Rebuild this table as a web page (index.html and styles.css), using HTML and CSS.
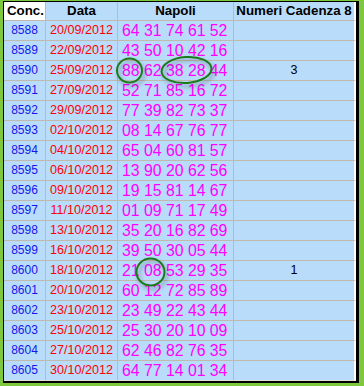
FILE: index.html
```html
<!DOCTYPE html>
<html>
<head>
<meta charset="utf-8">
<link rel="stylesheet" href="styles.css">
</head>
<body>
<div class="page">
  <div class="frame">
    <table class="grid">
      <colgroup>
        <col class="c-conc"><col class="c-data"><col class="c-nap"><col class="c-num">
      </colgroup>
      <thead>
        <tr>
          <th class="h-conc">Conc.</th>
          <th>Data</th>
          <th>Napoli</th>
          <th class="last">Numeri Cadenza 8</th>
        </tr>
      </thead>
      <tbody>
        <tr><td class="conc">8588</td><td class="date">20/09/2012</td><td class="nap">64 31 74 61 52</td><td class="num"></td></tr>
        <tr><td class="conc">8589</td><td class="date">22/09/2012</td><td class="nap">43 50 10 42 16</td><td class="num"></td></tr>
        <tr><td class="conc">8590</td><td class="date">25/09/2012</td><td class="nap">88 62 38 28 44</td><td class="num">3</td></tr>
        <tr><td class="conc">8591</td><td class="date">27/09/2012</td><td class="nap">52 71 85 16 72</td><td class="num"></td></tr>
        <tr><td class="conc">8592</td><td class="date">29/09/2012</td><td class="nap">77 39 82 73 37</td><td class="num"></td></tr>
        <tr><td class="conc">8593</td><td class="date">02/10/2012</td><td class="nap">08 14 67 76 77</td><td class="num"></td></tr>
        <tr><td class="conc">8594</td><td class="date">04/10/2012</td><td class="nap">65 04 60 81 57</td><td class="num"></td></tr>
        <tr><td class="conc">8595</td><td class="date">06/10/2012</td><td class="nap">13 90 20 62 56</td><td class="num"></td></tr>
        <tr><td class="conc">8596</td><td class="date">09/10/2012</td><td class="nap">19 15 81 14 67</td><td class="num"></td></tr>
        <tr><td class="conc">8597</td><td class="date">11/10/2012</td><td class="nap">01 09 71 17 49</td><td class="num"></td></tr>
        <tr><td class="conc">8598</td><td class="date">13/10/2012</td><td class="nap">35 20 16 82 69</td><td class="num"></td></tr>
        <tr><td class="conc">8599</td><td class="date">16/10/2012</td><td class="nap">39 50 30 05 44</td><td class="num"></td></tr>
        <tr><td class="conc">8600</td><td class="date">18/10/2012</td><td class="nap">21 08 53 29 35</td><td class="num">1</td></tr>
        <tr><td class="conc">8601</td><td class="date">20/10/2012</td><td class="nap">60 12 72 85 89</td><td class="num"></td></tr>
        <tr><td class="conc">8602</td><td class="date">23/10/2012</td><td class="nap">23 49 22 43 44</td><td class="num"></td></tr>
        <tr><td class="conc">8603</td><td class="date">25/10/2012</td><td class="nap">25 30 20 10 09</td><td class="num"></td></tr>
        <tr><td class="conc">8604</td><td class="date">27/10/2012</td><td class="nap">62 46 82 76 35</td><td class="num"></td></tr>
        <tr><td class="conc">8605</td><td class="date">30/10/2012</td><td class="nap">64 77 14 01 34</td><td class="num"></td></tr>
      </tbody>
    </table>
  </div>
  <svg class="marks" width="364" height="386" viewBox="0 0 364 386">
    <defs>
      <filter id="sh" x="-30%" y="-30%" width="160%" height="170%">
        <feGaussianBlur in="SourceAlpha" stdDeviation="2"/>
        <feOffset dx="2" dy="3" result="b"/>
        <feComponentTransfer><feFuncA type="linear" slope="0.35"/></feComponentTransfer>
        <feMerge><feMergeNode/><feMergeNode in="SourceGraphic"/></feMerge>
      </filter>
    </defs>
    <g fill="none" stroke="#1d7a1d" stroke-width="2" filter="url(#sh)">
      <ellipse cx="129.5" cy="70.5" rx="12.5" ry="12"/>
      <ellipse cx="186.5" cy="70" rx="25" ry="13" transform="rotate(-4 186.5 70)"/>
      <ellipse cx="150.5" cy="272" rx="14" ry="13.5"/>
    </g>
  </svg>
</div>
</body>
</html>
```

FILE: styles.css
```css
html, body {
  margin: 0;
  padding: 0;
}
body {
  background: #7dc83c;
  font-family: "Liberation Sans", Arial, sans-serif;
}
.page {
  position: relative;
  width: 364px;
  height: 386px;
  overflow: hidden;
}
.frame {
  margin: 1px 4px 0 3px;
  border-top: 1px solid #000;
  border-left: 1px solid #000;
  border-right: 3px solid #000;
  border-bottom: 2px solid #000;
  background: #fff;
  width: 352px;
  padding-right: 0;
}
.grid {
  border-collapse: separate;
  border-spacing: 0;
  table-layout: fixed;
  width: 352px;
  background: #b9dcfa;
}
.c-conc { width: 42px; }
.c-data { width: 72px; }
.c-nap { width: 116px; }
.c-num { width: 122px; }
.grid th,
.grid td {
  padding: 0;
  border-right: 1px solid #c2b9ad;
  border-bottom: 1px solid #c2b9ad;
  white-space: nowrap;
  overflow: hidden;
}
.grid th {
  height: 18px;
  line-height: 18px;
  font-size: 13.3px;
  font-weight: bold;
  color: #000;
  text-align: center;
}
.grid th.h-conc {
  background: #fff;
  text-align: left;
  padding-left: 3px;
}
.grid .last,
.grid td.num {
  border-right: 2px solid #fff;
}
.grid tbody tr:last-child td {
  border-bottom-color: #e4e0da;
}
.grid td {
  height: 19px;
  line-height: 19px;
}
.conc {
  text-align: center;
  color: #1414f0;
  font-size: 12px;
}
.date {
  text-align: center;
  color: #ff0000;
  font-size: 12.6px;
}
.nap {
  color: #ff00ff;
  font-size: 15.8px;
  padding-left: 4px !important;
}
.num {
  text-align: center;
  color: #000;
  font-size: 12.5px;
}
.marks {
  position: absolute;
  left: 0;
  top: 0;
  pointer-events: none;
}
```
